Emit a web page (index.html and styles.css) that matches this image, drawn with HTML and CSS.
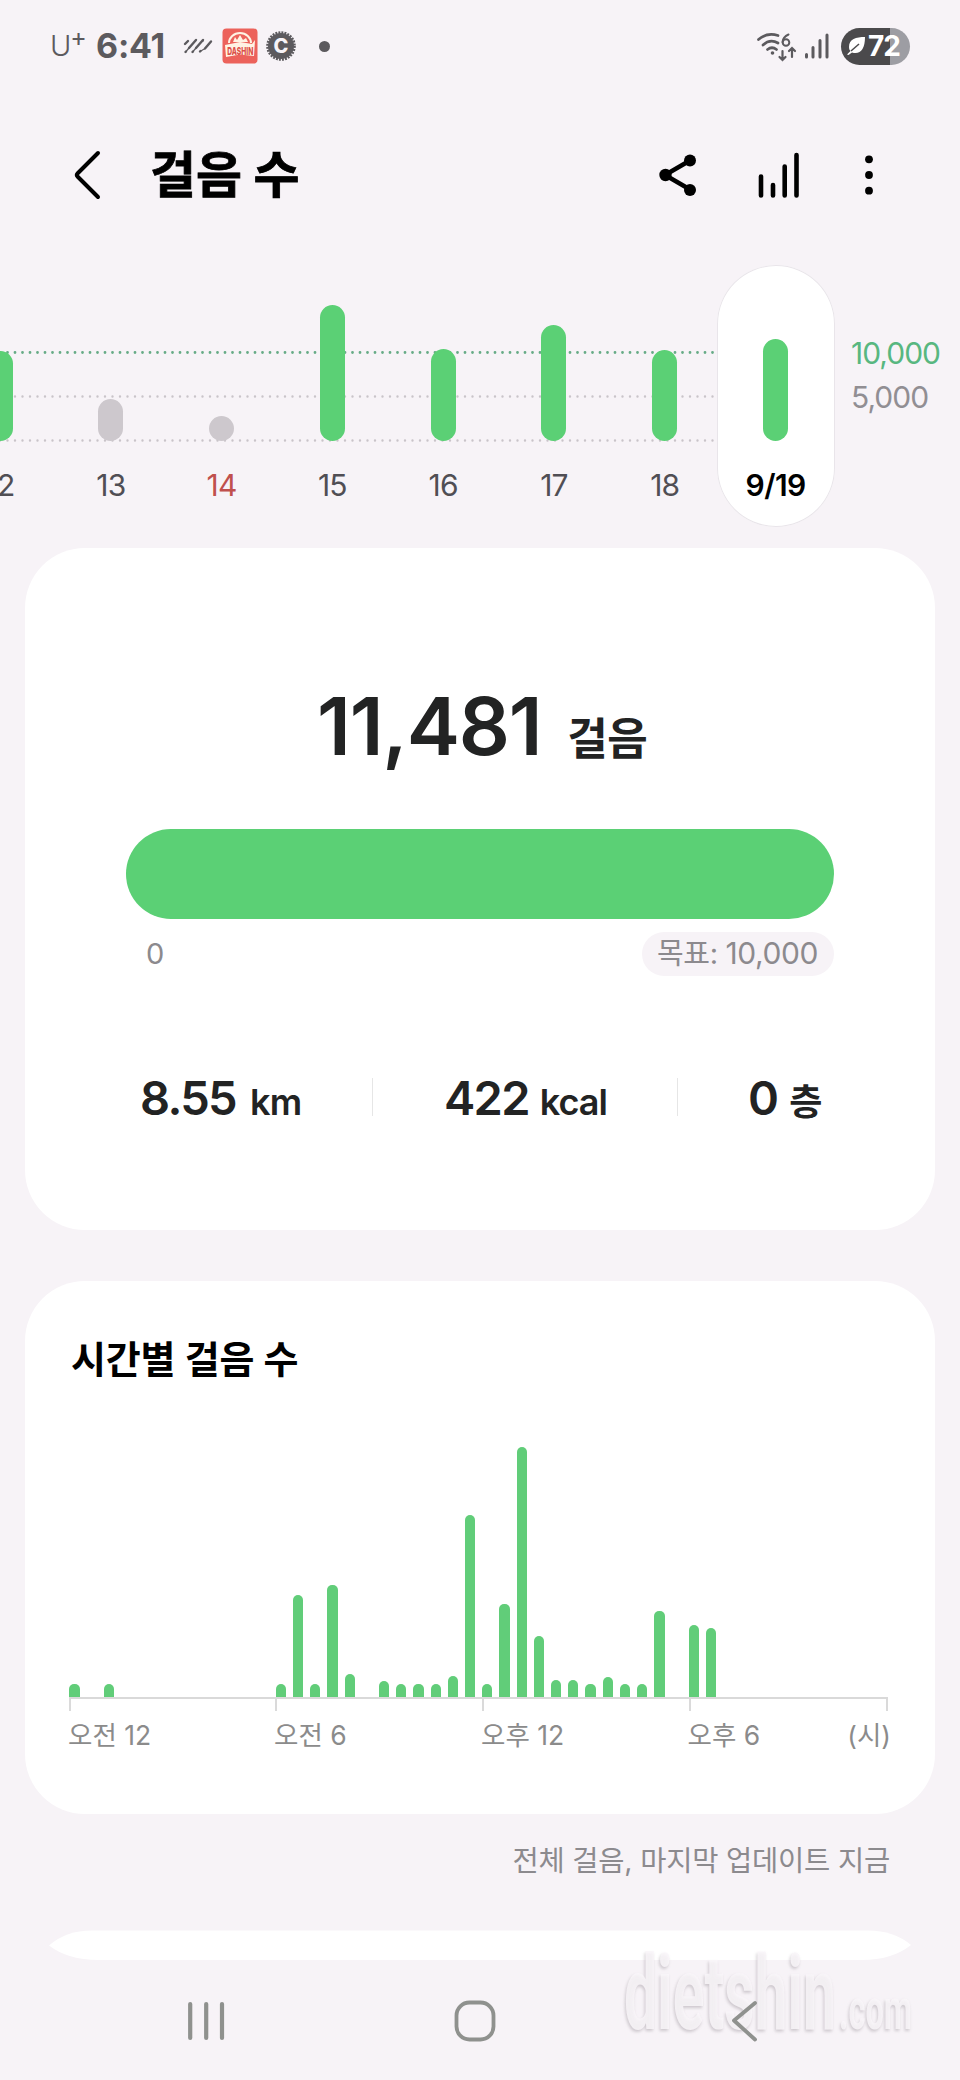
FILE: index.html
```html
<!DOCTYPE html>
<html lang="ko">
<head>
<meta charset="utf-8">
<title>걸음 수</title>
<link rel="stylesheet" href="styles.css">
</head>
<body>
<div class="screen">
  <div class="status">
    <div class="status-left">
      <span class="carrier">U<span class="carrier-plus">+</span></span>
      <span class="clock">6:41</span>
      <svg class="ic-stripes" width="30" height="18" viewBox="0 0 30 18" fill="none" stroke="#5c5a5e" stroke-width="2.400" stroke-linecap="round"><path d="M2 7l3-3M2.500 15l.5-.5M6 11L13 3M9.500 15l.500-.5M13 11L20 3M17 14.500l.500-.5M19.500 4l.300-.3M22 11.500L28 4.500"/><path d="M2.500 15L6 11M9.500 15L13 11M17 14.500L22 11.500" stroke-width="1.200"/></svg>
      <svg class="ic-app" width="36" height="36" viewBox="0 0 36 36"><rect x="0.500" y="0.500" width="35" height="35" rx="4" fill="#ec625b"/><path d="M7 15a11 10 0 0 1 22 0" fill="none" stroke="#fff3e4" stroke-width="2"/><path d="M11 14l2-5 2 3 3-5 3 5 3-2 2 4z" fill="#fff3e4"/><path d="M3 17l15-3 12 2 3-4-1 16-14-1.500L4 29z" fill="#fff3e4"/><text x="18.300" y="26.500" text-anchor="middle" textLength="26" lengthAdjust="spacingAndGlyphs" class="app-name">DASHIN</text></svg>
      <svg class="ic-badge" width="32" height="32" viewBox="0 0 32 32"><circle cx="16" cy="16" r="13" fill="#5c5a5e"/><circle cx="16" cy="16" r="13.500" fill="none" stroke="#5c5a5e" stroke-width="2.600" stroke-dasharray="1.900 1.130"/><text x="16" y="23" text-anchor="middle" class="badge-c">C</text></svg>
      <span class="status-dot"></span>
    </div>
    <div class="status-right">
      <svg width="42" height="32" viewBox="0 0 42 32" fill="none" stroke="#5c5a5e" stroke-width="2.700" stroke-linecap="round"><path d="M2.500 9.500Q11 2 22 5.500M7 15Q14 8.500 22 13M11.500 19.500Q16 16 20.500 19.500"/><circle cx="16.500" cy="23" r="1.800" fill="#5c5a5e" stroke="none"/><path d="M32.500 4.500Q27 7 26.500 12" stroke-width="2"/><circle cx="30" cy="12.500" r="3.300" stroke-width="2"/><path d="M26.500 21v9M23.500 27l3 3 3-3M36 27v-9M33 21l3-3 3 3" stroke-width="2.200"/></svg>
      <svg class="ic-signal" width="26" height="28" viewBox="0 0 26 28" stroke="#5c5a5e" stroke-width="3" stroke-linecap="round"><path d="M2.500 22.500v2.500M9 15.500V25M16 8.500V25M23 3V25"/></svg>
      <div class="battery">
        <svg width="20" height="20" viewBox="0 0 20 20"><path d="M19 1C10 1 3 3 3 11c0 2 .5 3 1.500 4L1 18.500 2.500 19 6 16.500c8 2.500 13-3 13-15.500z" fill="#fff"/><path d="M5 15L13 8" stroke="#4b4a4c" stroke-width="1.500"/></svg>
        <span class="battery-num">72</span>
      </div>
    </div>
  </div>

  <header class="header">
    <svg class="ic-back" width="30" height="52" viewBox="0 0 30 52" fill="none" stroke="#000" stroke-width="4" stroke-linecap="round" stroke-linejoin="round"><path d="M25 5L4.500 25.500Q3 27 4.500 28.500L25 49"/></svg>
    <h1 class="title">걸음 수</h1>
    <div class="actions">
      <svg width="40" height="52" viewBox="0 0 40 52"><path d="M32 12.500L7 27l25 14.500" fill="none" stroke="#000" stroke-width="4.500"/><circle cx="7.500" cy="27" r="6.200"/><circle cx="32" cy="12.500" r="6"/><circle cx="32" cy="42" r="6"/></svg>
      <svg width="46" height="52" viewBox="0 0 46 52" stroke="#000" stroke-width="4.600" stroke-linecap="round"><path d="M4 28.500V47.500M16 37V47.500M27.700 18.500V47.500M39.500 7V47.500"/></svg>
      <svg width="12" height="52" viewBox="0 0 12 52"><circle cx="6" cy="11.300" r="3.900"/><circle cx="6" cy="27" r="3.900"/><circle cx="6" cy="42.700" r="3.900"/></svg>
    </div>
  </header>

  <section class="week">
    <svg class="week-lines" width="717" height="95" viewBox="0 0 717 95" fill="none" stroke-linecap="round" stroke-dasharray="0 7.5"><path d="M0 3.500H717" stroke="#66ab86" stroke-width="2.800"/><path d="M0 47.500H717M0 91.500H717" stroke="#c9c4c9" stroke-width="2.400"/></svg>
    <div class="days">
      <div class="day"><i class="bar" style="height:90px"></i><span class="date">12</span></div>
      <div class="day"><i class="bar missed" style="height:42px"></i><span class="date">13</span></div>
      <div class="day"><i class="bar missed" style="height:25px"></i><span class="date sunday">14</span></div>
      <div class="day"><i class="bar" style="height:136px"></i><span class="date">15</span></div>
      <div class="day"><i class="bar" style="height:92px"></i><span class="date">16</span></div>
      <div class="day"><i class="bar" style="height:116px"></i><span class="date">17</span></div>
      <div class="day"><i class="bar" style="height:91px"></i><span class="date">18</span></div>
      <div class="day today"><i class="bar" style="height:102px"></i><span class="date">9/19</span></div>
    </div>
    <div class="scale"><span class="goal">10,000</span><span>5,000</span></div>
  </section>

  <section class="card summary">
    <div class="steps"><span class="steps-num">11,481</span><span class="steps-unit">걸음</span></div>
    <div class="progress"></div>
    <div class="range"><span class="zero">0</span><span class="target">목표: <span class="target-num">10,000</span></span></div>
    <div class="stats">
      <div class="stat distance"><b>8.55</b><span>km</span></div>
      <div class="stat energy"><b>422</b><span>kcal</span></div>
      <div class="stat floors"><b>0</b><span>층</span></div>
    </div>
  </section>

  <section class="card hourly">
    <h2 class="subtitle">시간별 걸음 수</h2>
    <div class="hours">
      <i style="height:13px"></i><i></i><i style="height:13px"></i><i></i><i></i><i></i><i></i><i></i><i></i><i></i><i></i><i></i>
      <i style="height:13px"></i><i style="height:102px"></i><i style="height:13px"></i><i style="height:112px"></i><i style="height:23px"></i><i></i><i style="height:16px"></i><i style="height:13px"></i><i style="height:13px"></i><i style="height:13px"></i><i style="height:21px"></i><i style="height:182px"></i>
      <i style="height:13px"></i><i style="height:93px"></i><i style="height:250px"></i><i style="height:61px"></i><i style="height:17px"></i><i style="height:17px"></i><i style="height:13px"></i><i style="height:20px"></i><i style="height:13px"></i><i style="height:13px"></i><i style="height:86px"></i><i></i>
      <i style="height:72px"></i><i style="height:69px"></i><i></i><i></i><i></i><i></i><i></i><i></i><i></i><i></i><i></i><i></i>
    </div>
    <div class="axis"><span>오전 12</span><span>오전 6</span><span>오후 12</span><span>오후 6</span><span class="axis-unit">(시)</span></div>
  </section>

  <p class="updated">전체 걸음, 마지막 업데이트 지금</p>

  <svg class="next-card" width="960" height="30" viewBox="0 0 960 30"><path d="M49 15.500Q66 0.500 92 0.500H868Q894 0.500 911 15Q892 30 862 30H98Q68 30 49 15.500z" fill="#fff"/></svg>

  <nav class="nav">
    <svg width="42" height="46" viewBox="0 0 42 46" stroke="#8f918e" stroke-width="4.200" stroke-linecap="round"><path d="M5.200 6V40M21.200 6V40M37 6V40"/></svg>
    <svg class="nav-home" width="46" height="46" viewBox="0 0 46 46"><rect x="4.500" y="4.500" width="37" height="37" rx="13" fill="none" stroke="#8f918e" stroke-width="3.800"/></svg>
    <svg width="30" height="46" viewBox="0 0 30 46" fill="none" stroke="#8f918e" stroke-width="3.800" stroke-linecap="round" stroke-linejoin="round"><path d="M25 5L4 22.500L25 41.500"/></svg>
  </nav>
  <svg class="watermark" width="310" height="100" viewBox="0 0 310 100"><text x="12" y="87" textLength="212" lengthAdjust="spacingAndGlyphs" class="wm-big">dietshin</text><text x="227" y="87" textLength="73" lengthAdjust="spacingAndGlyphs" class="wm-small">.com</text></svg>
</div>
</body>
</html>
```
FILE: styles.css
```css
* { box-sizing: border-box; margin: 0; padding: 0; }
body {
  background: #f7f3f7;
  font-family: "Inter", "Noto Sans CJK KR", sans-serif;
  color: #222323;
}
svg { display: block; flex: none; overflow: visible; }
.screen {
  position: relative;
  width: 960px;
  height: 2080px;
  overflow: hidden;
  display: flex;
  flex-direction: column;
}

/* status bar */
.status {
  height: 92px;
  padding: 0 50px 0 50px;
  display: flex;
  justify-content: space-between;
  align-items: center;
  color: #5c5a5e;
  flex: none;
}
.status-left, .status-right { display: flex; align-items: center; }
.carrier { width: 46px; font: 300 29px/40px "Inter", sans-serif; display: flex; }
.carrier-plus { font-size: 25px; font-weight: 400; line-height: 22px; margin-left: -1px; }
.clock { width: 87px; font-size: 34px; font-weight: 700; line-height: 40px; letter-spacing: -0.2px; }
.ic-app { margin-left: 9px; }
.ic-badge { margin-left: 7px; }
.app-name { font: 800 11px "Inter", sans-serif; fill: #dc4e48; }
.badge-c { font: 800 20px "Inter", sans-serif; fill: #f7f3f7; }
.status-dot { width: 11px; height: 11px; border-radius: 50%; background: #5c5a5e; margin-left: 22px; }
.ic-signal { margin-left: 6px; }
.battery {
  width: 69px;
  height: 37px;
  margin-left: 11px;
  padding-left: 5px;
  border-radius: 19px;
  background: linear-gradient(90deg, #4b4a4c 49px, #9d9da3 49px);
  display: flex;
  align-items: center;
}
.battery-num { color: #fff; font-size: 28px; font-weight: 700; letter-spacing: -1px; margin-left: 2px; line-height: 37px; }

/* title bar */
.header { height: 166px; padding: 56px 85px 0 73px; display: flex; align-items: flex-start; flex: none; }
.title { margin-left: 47px; font-size: 50px; line-height: 54px; font-weight: 700; color: #000; letter-spacing: -0.1px; -webkit-text-stroke: 0.8px #000; }
.actions { margin-left: auto; display: flex; }
.actions svg:nth-child(2) { margin-left: 59px; }
.actions svg:nth-child(3) { margin-left: 60px; }

/* week chart */
.week { position: relative; height: 290px; display: flex; flex: none; }
.week-lines { position: absolute; left: 0; top: 91px; }
.days { position: relative; display: flex; width: 886.400px; margin-left: -55.400px; padding-top: 7px; flex: none; }
.day {
  width: 110.800px;
  height: 262px;
  padding-bottom: 24px;
  display: flex;
  flex-direction: column;
  align-items: center;
  justify-content: flex-end;
  flex: none;
}
.bar { width: 25px; border-radius: 12.500px; background: #5bd075; }
.missed { background: #cdc8cd; }
.date { margin-top: 26px; height: 36px; line-height: 36px; font-size: 30px; letter-spacing: -0.8px; color: #504e54; }
.sunday { color: #c0504d; }
.today { width: 118px; margin-left: -3.600px; background: #fff; border-radius: 59px; box-shadow: inset 0 0 0 1px #e9e5ea; }
.today .date { font-weight: 600; color: #000; letter-spacing: -0.6px; }
.scale { margin: 73px 0 0 20px; display: flex; flex-direction: column; font-size: 30px; line-height: 44px; letter-spacing: -1px; color: #918e93; }
.goal { color: #58b780; }

/* cards */
.card { margin: 0 25px; background: #fff; border-radius: 60px; flex: none; }
.summary { height: 682px; padding: 128px 101px 0; }
.steps { height: 100px; display: flex; justify-content: center; align-items: baseline; font-weight: 600; margin-left: 4px; }
.steps-num { font-size: 80px; line-height: 100px; letter-spacing: -1.200px; }
.steps-unit { font-size: 44px; margin-left: 26px; letter-spacing: -0.700px; }
.progress { margin: 53px 0 13px; height: 90px; border-radius: 45px; background: #5bd075; }
.range { display: flex; justify-content: space-between; font-size: 29px; line-height: 43px; height: 44px; color: #8c8a8e; }
.zero { margin-left: 20px; }
.target { padding: 0 16px 0 15px; border-radius: 22px; background: #f7f3f7; height: 44px; letter-spacing: -0.400px; }
.target-num { font-size: 30px; }
.stats { display: flex; margin-top: 102px; height: 38px; }
.stat { display: flex; align-items: baseline; line-height: 40px; font-weight: 600; white-space: nowrap; }
.stat b { font-size: 47px; font-weight: 600; letter-spacing: -1.700px; }
.stat span { font-size: 36px; margin-left: 14px; letter-spacing: -0.800px; }
.distance { width: 246px; padding-left: 14px; }
.energy { width: 305px; padding-left: 71px; border-left: 1px solid #e6e6e6; }
.energy span { margin-left: 11px; letter-spacing: -1px; }
.floors { padding-left: 70px; border-left: 1px solid #e6e6e6; }
.floors span { font-size: 36px; margin-left: 12px; }

.hourly { height: 533px; margin-top: 51px; padding: 50px 44px 0; }
.subtitle { font-size: 38px; line-height: 56px; font-weight: 600; color: #000; letter-spacing: -0.200px; margin-left: 2px; }
.hours { height: 310px; width: 819px; display: flex; align-items: flex-end; gap: 6.920px; padding-left: 0.300px; }
.hours i { width: 10.300px; border-radius: 5px 5px 0 0; background: #61cd79; flex: none; }
.axis {
  width: 819px;
  border-top: 2px solid #d9d9d9;
  display: grid;
  grid-template-columns: 206px 207px 206.500px 1fr auto;
  grid-template-rows: 12px 36px;
  font-size: 26.500px;
  line-height: 36px;
  color: #8b8b8b;
  letter-spacing: 0;
}
.axis span { grid-row: 1 / 3; padding-top: 18px; background: linear-gradient(#dadada, #dadada) 1px 0 / 2px 12px no-repeat; margin-left: -1px; white-space: nowrap; }
.axis .axis-unit { background-position: right 3px top 0; margin-right: -3px; }

.updated { margin: 27px 70px 0; text-align: right; font-size: 28.500px; line-height: 40px; color: #8c8a8e; letter-spacing: -0.200px; flex: none; }
.next-card { margin-top: 49px; }

/* system navigation */
.nav { position: relative; z-index: 1; height: 120px; padding: 38px 200px 0 185px; display: flex; justify-content: space-between; }
.nav-home { margin-right: 7px; }
.watermark { position: absolute; left: 612px; top: 1942px; filter: drop-shadow(-1px 2px 1.500px rgba(90, 80, 90, .3)); }
.watermark text { fill: #faf6fa; font-family: "Roboto", sans-serif; font-weight: 700; opacity: .85; }
.watermark .wm-big { font-size: 104px; }
.watermark .wm-small { font-size: 58px; }
```
